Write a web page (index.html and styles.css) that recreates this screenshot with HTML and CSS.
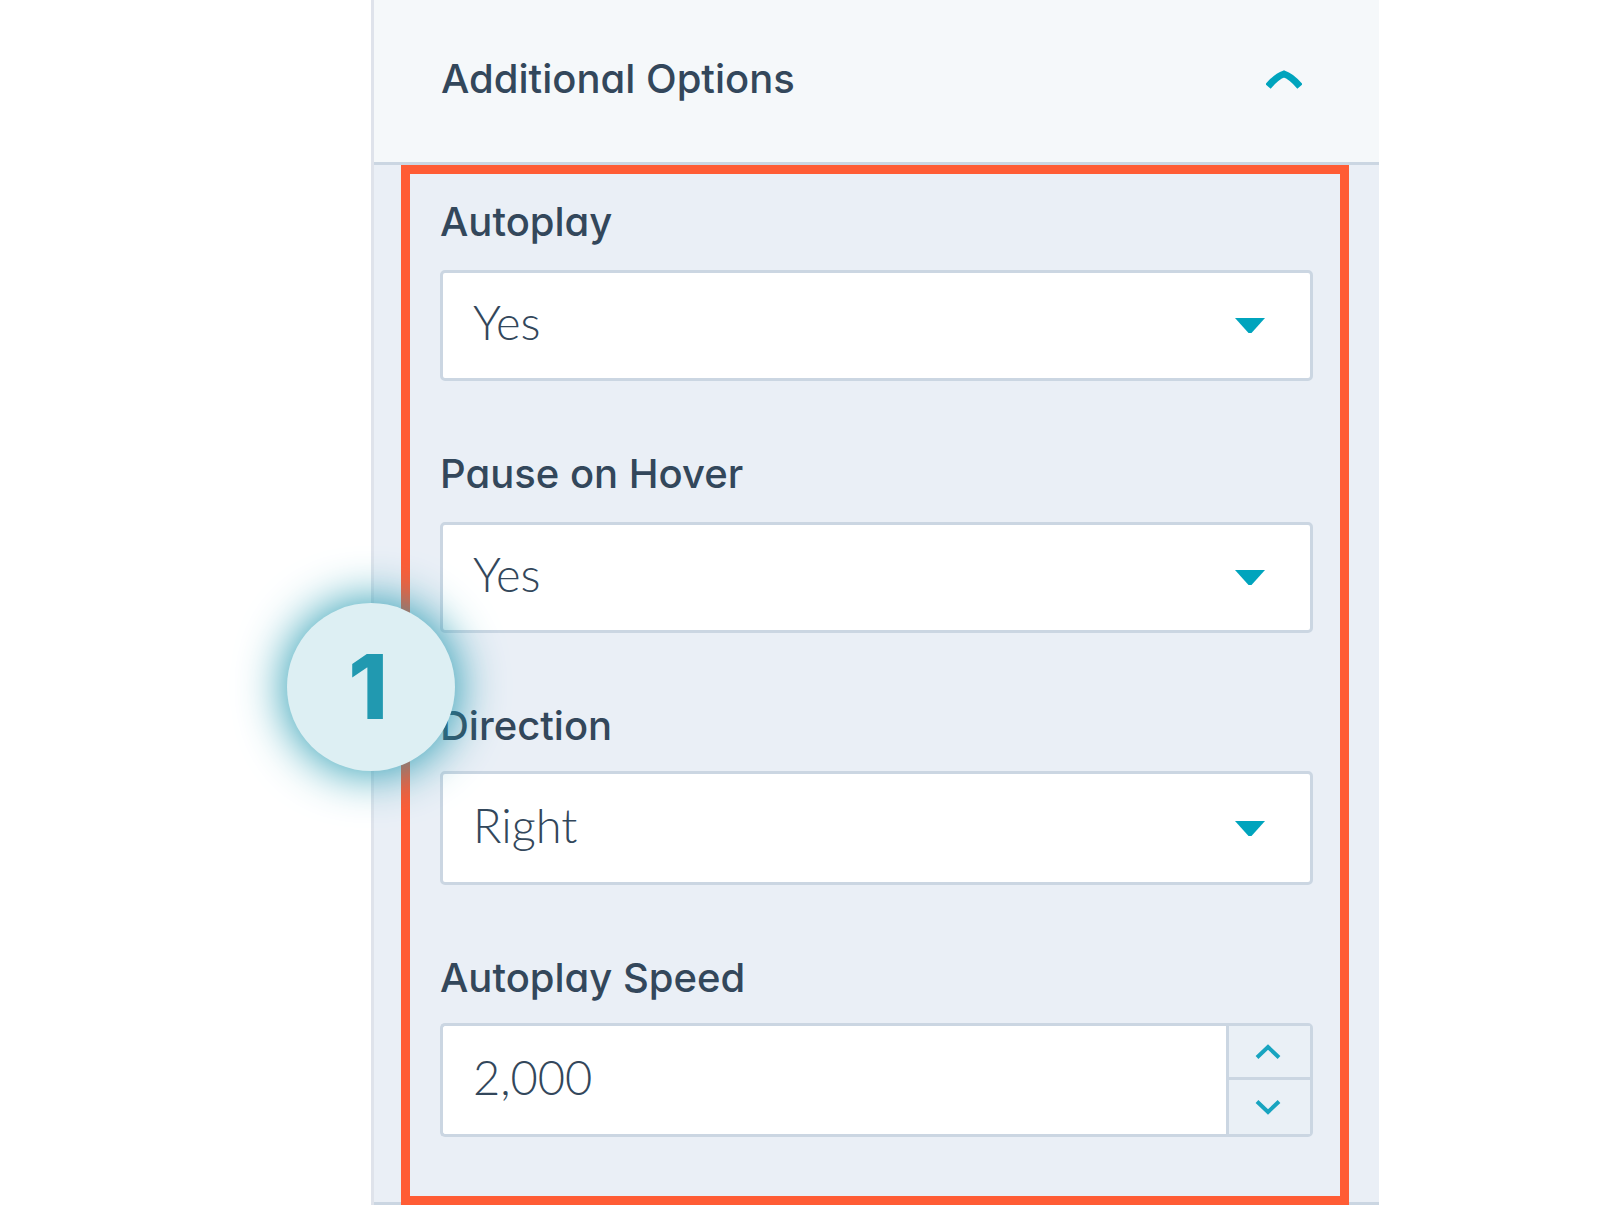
FILE: index.html
```html
<!DOCTYPE html>
<html lang="en">
<head>
<meta charset="utf-8">
<meta name="viewport" content="width=device-width, initial-scale=1">
<title>Additional Options</title>
<link rel="stylesheet" href="styles.css">
</head>
<body>
<main class="page">
  <section class="panel">
    <h2 class="panel-heading">
      <button class="panel-toggle" type="button" aria-expanded="true" aria-controls="options">
        <span>Additional Options</span>
        <svg class="toggle-icon" viewBox="0 0 36 24" aria-hidden="true"><path d="M2 19.500Q11 9 18 7Q25 9 34 19.500"/></svg>
      </button>
    </h2>
    <div class="panel-body" id="options">
      <form class="options">
        <div class="field">
          <label class="label" for="autoplay">Autoplay</label>
          <div class="select">
            <select class="control" id="autoplay"><option>Yes</option><option>No</option></select>
            <svg class="caret" viewBox="0 0 30 15" aria-hidden="true"><path d="M0 0H30L16.500 15H13.500Z"/></svg>
          </div>
        </div>
        <div class="field">
          <label class="label" for="pause">Pause on Hover</label>
          <div class="select">
            <select class="control" id="pause"><option>Yes</option><option>No</option></select>
            <svg class="caret" viewBox="0 0 30 15" aria-hidden="true"><path d="M0 0H30L16.500 15H13.500Z"/></svg>
          </div>
        </div>
        <div class="field field-tall">
          <label class="label" for="direction">Direction</label>
          <div class="select">
            <select class="control" id="direction"><option>Right</option><option>Left</option></select>
            <svg class="caret" viewBox="0 0 30 15" aria-hidden="true"><path d="M0 0H30L16.500 15H13.500Z"/></svg>
          </div>
        </div>
        <div class="field field-tall">
          <label class="label" for="speed">Autoplay Speed</label>
          <div class="stepper">
            <input class="control stepper-input" id="speed" type="text" inputmode="numeric" value="2,000">
            <div class="stepper-buttons">
              <button class="step" type="button" aria-label="Increase"><svg class="step-icon" viewBox="0 0 30 18" aria-hidden="true"><path d="M4 14.500L15 4L26 14.500"/></svg></button>
              <button class="step" type="button" aria-label="Decrease"><svg class="step-icon" viewBox="0 0 30 18" aria-hidden="true"><path d="M4 3.500L15 14L26 3.500"/></svg></button>
            </div>
          </div>
        </div>
      </form>
      <span class="badge">1</span>
    </div>
  </section>
</main>
</body>
</html>
```
FILE: styles.css
```css
* {
  box-sizing: border-box;
}

body {
  margin: 0;
  background: #fff;
  color: #33475b;
  font-family: Inter, "Liberation Sans", sans-serif;
}

.page {
  display: grid;
  grid-template-columns: 371fr 1008fr 228fr;
}

.panel {
  grid-column: 2;
  min-width: 0;
  border-left: 3px solid #dfe3eb;
  background: #eaeff6;
}

.panel-heading {
  margin: 0;
}

.panel-toggle {
  display: flex;
  justify-content: space-between;
  align-items: center;
  width: 100%;
  padding: 55px 77px 59px 67px;
  border: 0;
  border-bottom: 3px solid #cbd6e2;
  background: #f5f8fa;
  color: inherit;
  font: 500 40px/48px Inter, "Liberation Sans", sans-serif;
  font-feature-settings: "cv11";
  text-align: left;
}

.toggle-icon {
  width: 36px;
  height: 24px;
  fill: none;
  stroke: #00a4bd;
  stroke-width: 7px;
}

.panel-body {
  position: relative;
  padding: 0 30px 0 27px;
  border-bottom: 3px solid #cbd6e2;
}

.options {
  display: flex;
  flex-direction: column;
  gap: 69px;
  margin-bottom: -3px;
  padding: 24px 27px 59px 30px;
  border: 9px solid #ff5c35;
}

.field {
  display: flex;
  flex-direction: column;
  gap: 24px;
}

.field-tall {
  gap: 21px;
}

.label {
  font-size: 40px;
  font-weight: 500;
  font-feature-settings: "cv11";
  line-height: 48px;
}

.select {
  display: grid;
  align-items: center;
}

.control {
  grid-area: 1 / 1;
  width: 100%;
  min-width: 0;
  height: 111px;
  margin: 0;
  padding: 0 30px 8px;
  border: 3px solid #cbd6e2;
  border-radius: 5px;
  appearance: none;
  background: #fff;
  color: inherit;
  font: 300 47px/54px Lato, "Liberation Sans", sans-serif;
}

.field-tall .control {
  height: 114px;
  padding-bottom: 6px;
}

.caret {
  grid-area: 1 / 1;
  justify-self: end;
  width: 30px;
  height: 15px;
  margin-right: 48px;
  fill: #00a4bd;
  pointer-events: none;
}

.stepper {
  display: flex;
}

.stepper-input {
  flex: 1;
  border-right: 0;
  border-radius: 5px 0 0 5px;
}

.stepper-buttons {
  display: grid;
  grid-template-rows: 51px 54px;
  gap: 3px;
  width: 87px;
  border: 3px solid #cbd6e2;
  border-radius: 0 5px 5px 0;
  background: #cbd6e2;
}

.step {
  display: grid;
  place-items: center;
  padding: 0 3px 0 0;
  border: 0;
  background: #eaf0f6;
}

.step-icon {
  width: 30px;
  height: 18px;
  fill: none;
  stroke: #18a4c0;
  stroke-width: 4px;
}

.badge {
  position: absolute;
  top: 438px;
  left: -87px;
  width: 168px;
  height: 168px;
  padding-right: 6px;
  border-radius: 50%;
  background: #ddeff3;
  box-shadow: 0 0 48px 2px #2199b0;
  color: #2199b0;
  font-size: 90px;
  font-weight: 800;
  line-height: 168px;
  text-align: center;
}
```
